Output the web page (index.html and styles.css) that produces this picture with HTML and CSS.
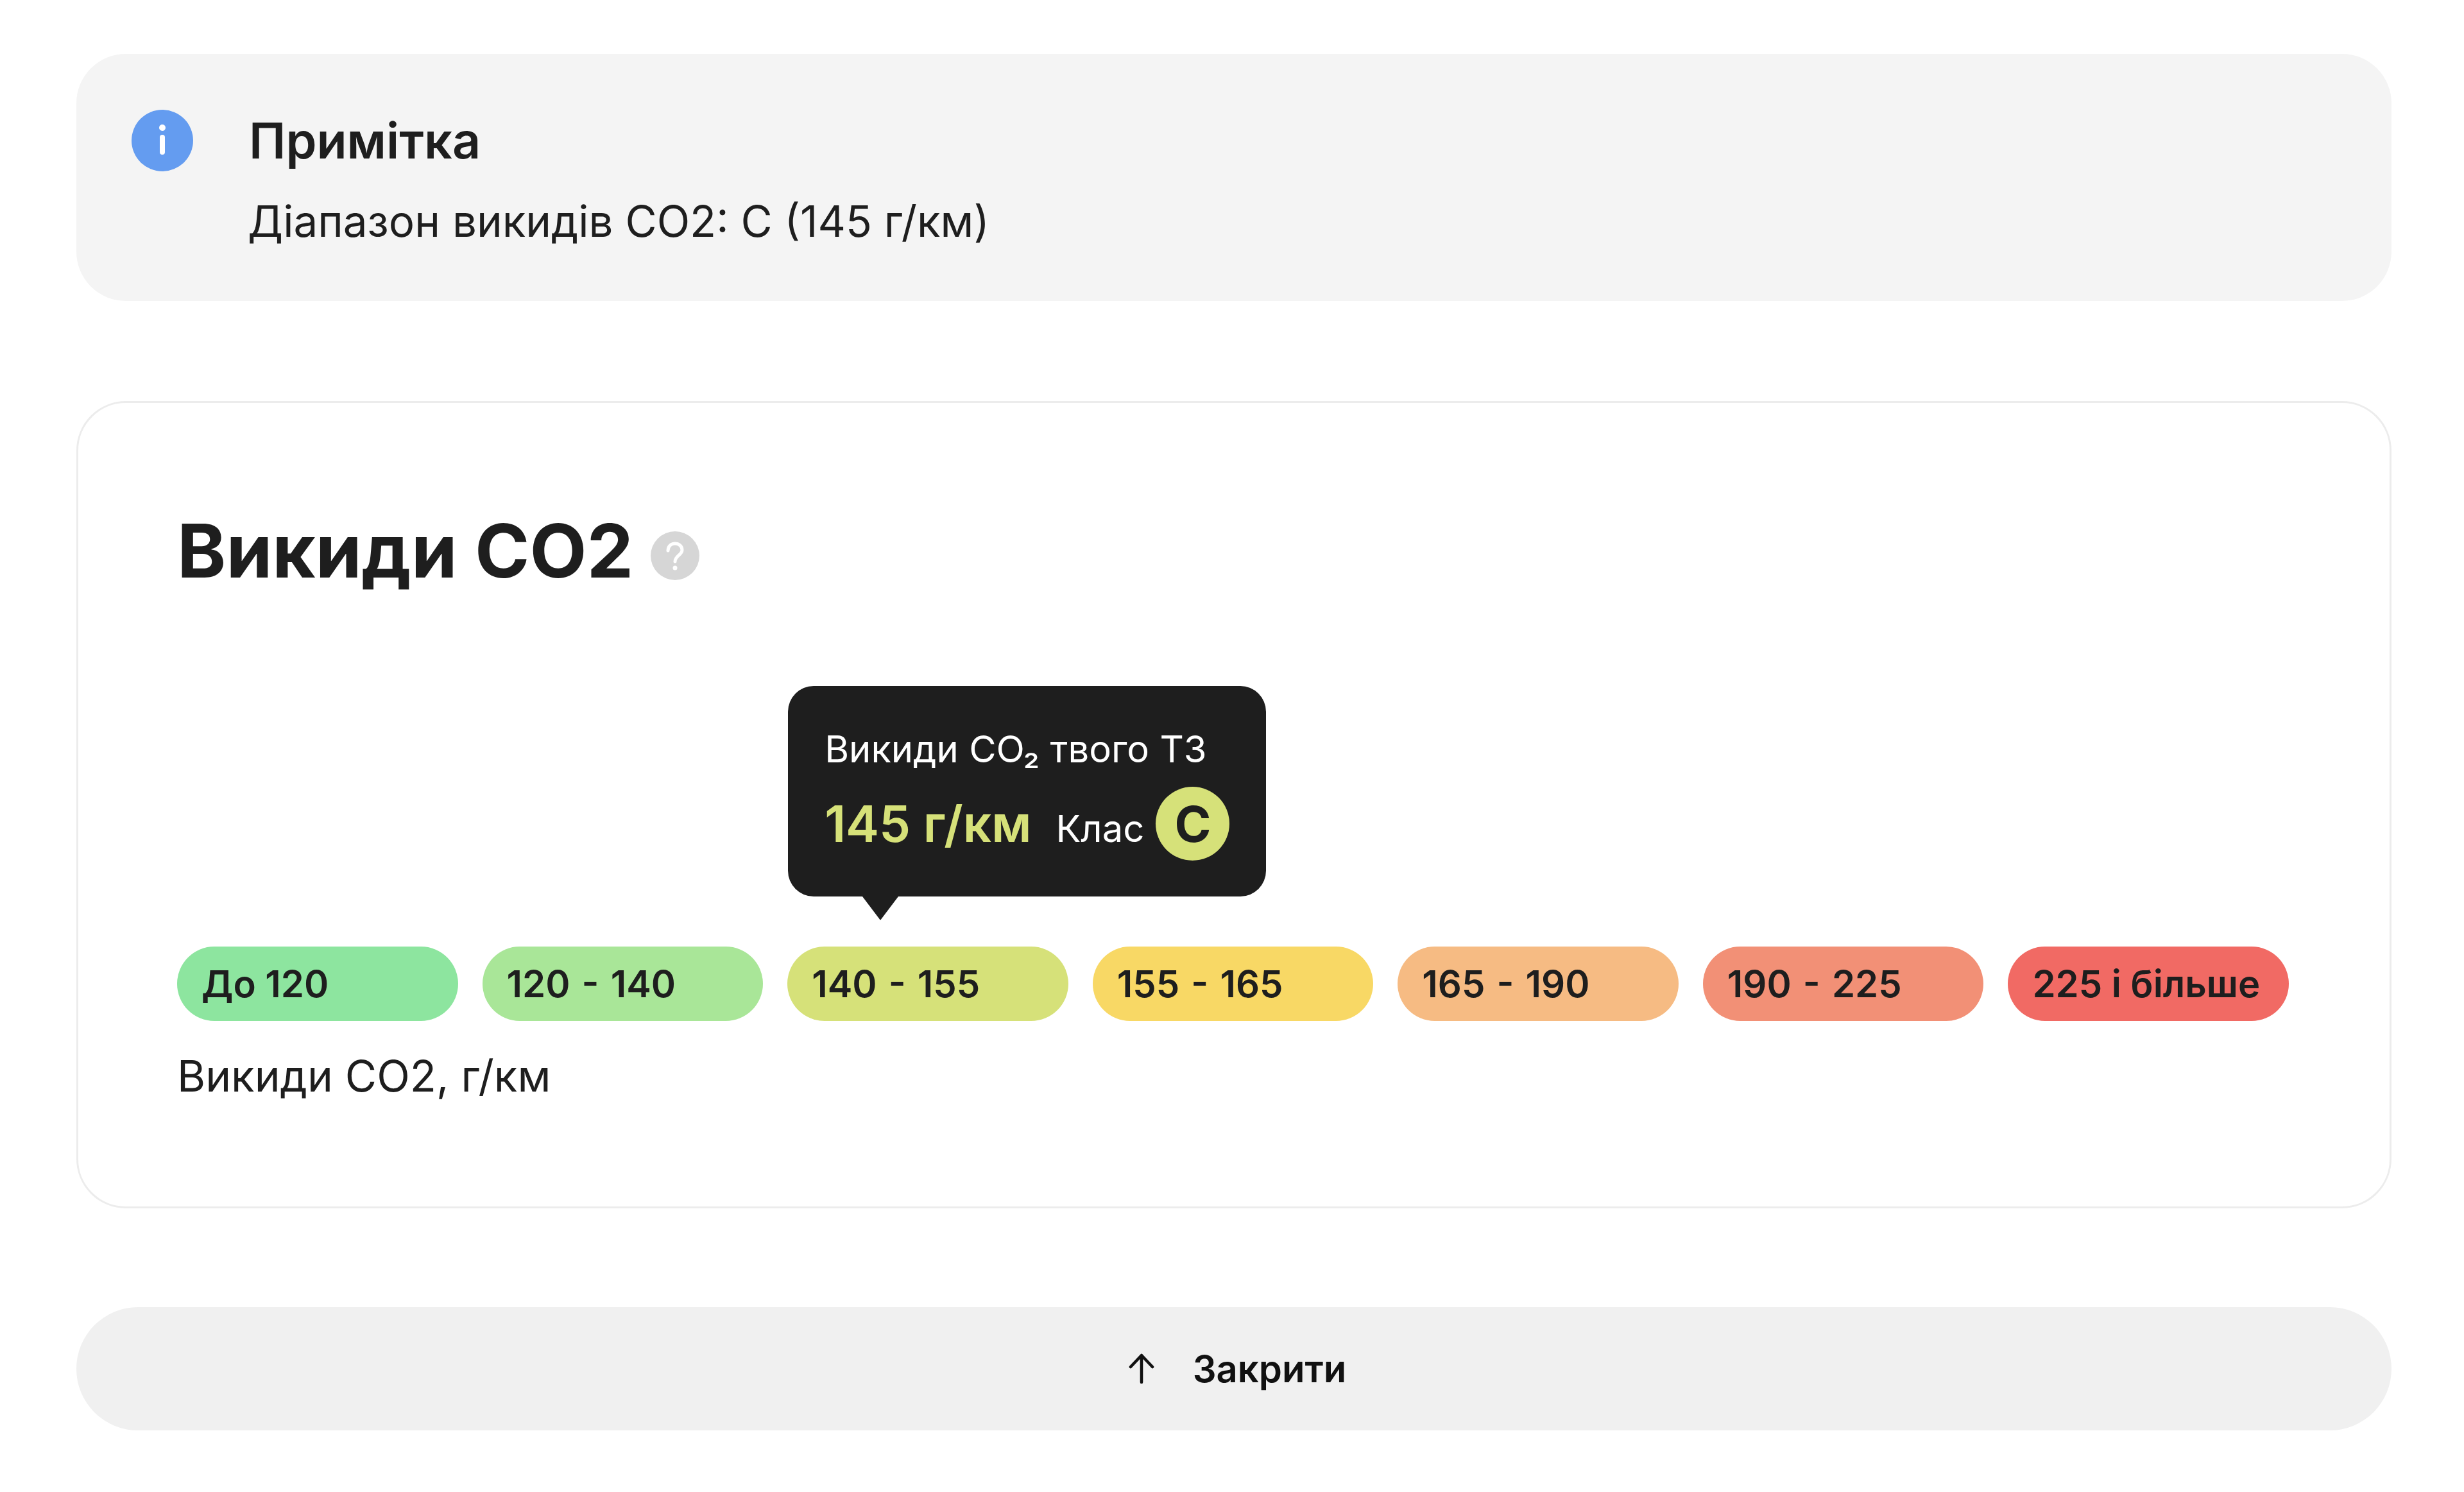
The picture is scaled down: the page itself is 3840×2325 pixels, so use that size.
FILE: index.html
```html
<!DOCTYPE html>
<html lang="uk">
<head>
<meta charset="utf-8">
<title>Викиди CO2</title>
<link rel="stylesheet" href="styles.css">
</head>
<body>
<main class="page">
  <section class="note">
    <svg class="note-icon" viewBox="0 0 96 96"><circle cx="48" cy="48" r="48" fill="#649cf0"/><circle cx="48" cy="28" r="5" fill="#fff"/><rect x="44" y="39" width="8" height="31" rx="4" fill="#fff"/></svg>
    <div class="note-body">
      <h2 class="note-title">Примітка</h2>
      <p class="note-text">Діапазон викидів CO2: C (145 г/км)</p>
    </div>
  </section>
  <section class="card">
    <h1 class="card-title">Викиди CO2 <svg class="help" viewBox="0 0 76 76"><circle cx="38" cy="38" r="38" fill="#d6d6d6"/><path d="M27 30c0-7 5-11 11-11s11 4 11 10c0 8-11 9-11 18" fill="none" stroke="#fff" stroke-width="5" stroke-linecap="round"/><circle cx="38" cy="57" r="3.5" fill="#fff"/></svg></h1>
    <div class="scale">
      <div class="pill p1">До 120</div>
      <div class="pill range p2">120 - 140</div>
      <div class="pill range p3">140 - 155
        <div class="tip">
          <div class="tip-top">Викиди CO₂ твого ТЗ</div>
          <div class="tip-row"><span class="tip-val">145 г/км</span><span class="tip-cls">Клас</span><span class="tip-badge">C</span></div>
        </div>
      </div>
      <div class="pill range p4">155 - 165</div>
      <div class="pill range p5">165 - 190</div>
      <div class="pill range p6">190 - 225</div>
      <div class="pill p7">225 і більше</div>
    </div>
    <p class="axis">Викиди CO2, г/км</p>
  </section>
  <button class="close"><svg class="arrow" viewBox="0 0 40 48"><path d="M20 45V4M3 21 20 3l17 18" fill="none" stroke="#111" stroke-width="4.6" stroke-linecap="round" stroke-linejoin="round"/></svg><span>Закрити</span></button>
</main>
</body>
</html>
```
FILE: styles.css
```css
* { box-sizing: border-box; }
html, body { margin: 0; background: #fff; }
body { font-family: Inter, "Noto Sans", sans-serif; color: #1e1e1e; }
.page { width: 3840px; height: 2325px; padding: 84px 113px 0 119px; display: flex; flex-direction: column; }
.note { height: 385px; background: #f4f4f4; border-radius: 77px; padding: 87px 84px 0 86px; display: flex; gap: 87px; flex: none; }
.note-icon { width: 96px; height: 96px; flex: none; margin-top: 0; }
.note-title { margin: 0; font-size: 77px; line-height: 96px; font-weight: 600; }
.note-text { margin: 30px 0 0 -2px; font-size: 67.3px; line-height: 96px; font-weight: 400; }
.card { margin-top: 156px; height: 1258px; border: 3px solid #ececec; border-radius: 77px; padding: 158px 157px 0 154px; flex: none; }
.card-title { margin: 0; display: flex; align-items: center; font-size: 115.5px; line-height: 144px; font-weight: 700; gap: 27px; }
.help { width: 76px; height: 76px; margin-top: 16px; flex: none; }
.scale { margin-top: 545px; display: grid; grid-template-columns: repeat(7, 1fr); gap: 38px; }
.pill { position: relative; height: 116px; border-radius: 58px; padding: 0 38px; display: flex; align-items: center; font-size: 58px; font-weight: 600; }
.range { word-spacing: 3.5px; }
.p1 { background: #8de59f; }
.p2 { background: #a9e698; }
.p3 { background: #d6e179; }
.p4 { background: #f8d865; }
.p5 { background: #f6bb83; }
.p6 { background: #f29076; }
.p7 { background: #f16a64; }
.tip { position: absolute; left: 1px; bottom: 194px; width: 745px; height: 328px; background: #1e1e1e; border-radius: 40px; padding: 60px 57px 0; color: #fff; font-weight: 400; word-spacing: 0; }
.tip::after { content: ""; position: absolute; left: 116px; top: 100%; border-style: solid; border-width: 37px 28px 0; border-color: #1e1e1e transparent transparent; }
.tip-top { font-size: 58px; line-height: 76px; white-space: nowrap; }
.tip-row { display: flex; align-items: center; margin-top: 21px; white-space: nowrap; }
.tip-val { flex: none; font-size: 78px; font-weight: 600; color: #d6e179; line-height: 115px; }
.tip-cls { flex: none; font-size: 58px; margin-left: 38px; margin-top: 14px; }
.tip-badge { flex: none; width: 115px; height: 115px; margin-left: 18px; border-radius: 50%; background: #d6e179; color: #1e1e1e; font-size: 77px; font-weight: 700; display: flex; align-items: center; justify-content: center; }
.axis { margin: 38px 0 0; font-size: 67.5px; line-height: 96px; }
.close { margin-top: 154px; height: 192px; border: 0; border-radius: 96px; background: #f0f0f0; display: flex; align-items: center; justify-content: center; gap: 60px; font-family: inherit; font-size: 58px; font-weight: 600; color: #111; flex: none; padding: 0 0 0 11px; }
.arrow { width: 40px; height: 48px; }
```
